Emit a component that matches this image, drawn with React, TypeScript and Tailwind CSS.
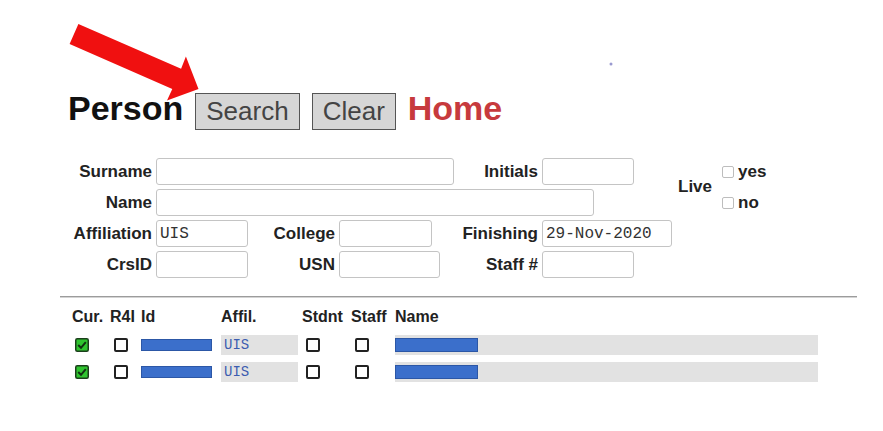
const sans = "font-['Liberation_Sans',Arial,sans-serif]";
const mono = "font-['Liberation_Mono','Courier_New',monospace]";

function Box() {
  return <span className="block w-[14px] h-[14px] border-2 border-[#222] rounded-[2px] bg-white" />;
}

function Checked() {
  return (
    <svg width="14" height="14" viewBox="0 0 14 14" className="block">
      <rect x="0.75" y="0.75" width="12.5" height="12.5" rx="1.5" fill="#2fc42f" stroke="#1b3f1b" strokeWidth="1.5" />
      <path d="M3.2 7 L6 9.8 L10.8 4.2" fill="none" stroke="#123012" strokeWidth="2" />
    </svg>
  );
}

function SmallBox({ label }: { label: string }) {
  return (
    <div className="flex items-center h-[27px] gap-[4px]">
      <span className="block w-[12px] h-[12px] border border-[#bdbdbd] rounded-[2px] bg-white" />
      <span className="text-[17px] font-bold text-[#222]">{label}</span>
    </div>
  );
}

function Label({ text, cls = "" }: { text: string; cls?: string }) {
  return (
    <div className={`text-right text-[17px] font-bold text-[#222] leading-[27px] ${cls}`}>{text}</div>
  );
}

function Field({ w, value = "", cls = "" }: { w: string; value?: string; cls?: string }) {
  return (
    <div className={`ml-[4px] ${cls}`}>
      <input
        readOnly
        value={value}
        className={`${w} h-[27px] border border-[#c4c4c4] rounded-[3px] bg-white px-[3px] ${mono} text-[16px] text-[#333] outline-none`}
      />
    </div>
  );
}

function Row() {
  return (
    <div className="flex h-[20px] items-center">
      <div className="w-[38px] pl-[3px]"><Checked /></div>
      <div className="w-[31px] pl-[4px]"><Box /></div>
      <div className="w-[80px]">
        <div className="w-[71px] h-[12px] bg-[#3b6fcb] border border-[#2c57a6]" />
      </div>
      <div className="w-[81px] h-full">
        <div className={`w-[77px] h-full bg-[#e2e2e2] pl-[3px] ${mono} text-[14px] leading-[20px] text-[#3c5db0]`}>UIS</div>
      </div>
      <div className="w-[49px] pl-[4px]"><Box /></div>
      <div className="w-[44px] pl-[4px]"><Box /></div>
      <div className="w-[423px] h-full bg-[#e2e2e2] flex items-center">
        <div className="w-[83px] h-[14px] bg-[#3b6fcb] border border-[#2c57a6]" />
      </div>
    </div>
  );
}

export default function App() {
  return (
    <div className={`relative w-[883px] h-[431px] bg-white overflow-hidden ${sans}`}>
      {/* title */}
      <div className="flex items-baseline gap-[12px] pl-[68px] pt-[91px]">
        <span className="text-[34px] leading-none font-bold text-[#111]">Person</span>
        <button className="h-[37px] px-[10px] border border-[#555] bg-[#d6d6d6] text-[26px] leading-[35px] text-[#444]">
          Search
        </button>
        <button className="h-[37px] px-[10px] border border-[#555] bg-[#d6d6d6] text-[26px] leading-[35px] text-[#444]">
          Clear
        </button>
        <span className="text-[34px] leading-none font-bold text-[#c73a3d]">Home</span>
      </div>

      {/* search form */}
      <div className="mt-[28px] ml-[64px] grid grid-cols-[88px_110px_73px_115px_88px_134px_auto] gap-y-[4px] items-center">
        <Label text="Surname" />
        <Field w="w-[298px]" cls="col-span-3" />
        <Label text="Initials" />
        <Field w="w-[92px]" />
        <div className="row-span-2 flex items-center pl-[6px] gap-[10px] self-stretch">
          <span className="text-[17px] font-bold text-[#222]">Live</span>
          <div className="flex flex-col gap-[4px]">
            <SmallBox label="yes" />
            <SmallBox label="no" />
          </div>
        </div>

        <Label text="Name" />
        <Field w="w-[438px]" cls="col-span-5" />

        <Label text="Affiliation" />
        <Field w="w-[92px]" value="UIS" />
        <Label text="College" />
        <Field w="w-[93px]" />
        <Label text="Finishing" />
        <Field w="w-[130px]" value="29-Nov-2020" />
        <div />

        <Label text="CrsID" />
        <Field w="w-[92px]" />
        <Label text="USN" />
        <Field w="w-[101px]" />
        <Label text="Staff #" />
        <Field w="w-[92px]" />
        <div />
      </div>

      <div className="mt-[18px] ml-[60px] w-[797px] border-t border-b border-t-[#9c9c9c] border-b-[#d4d4d4]" />

      {/* results */}
      <div className="ml-[72px] mt-[10px]">
        <div className="flex text-[16px] leading-[18px] font-bold text-[#222]">
          <div className="w-[38px]">Cur.</div>
          <div className="w-[31px]">R4I</div>
          <div className="w-[80px]">Id</div>
          <div className="w-[81px]">Affil.</div>
          <div className="w-[49px]">Stdnt</div>
          <div className="w-[44px]">Staff</div>
          <div className="w-[423px]">Name</div>
        </div>
        <div className="mt-[9px] flex flex-col gap-[7px]">
          <Row />
          <Row />
        </div>
      </div>

      {/* annotation arrow */}
      <svg className="absolute inset-0 pointer-events-none" width="883" height="431" viewBox="0 0 883 431">
        <polygon
          points="78.4,23.9 181.1,68.7 185.9,56.5 198.5,89 167,100.5 172.3,88.9 69.6,44.1"
          fill="#f01010"
        />
        <circle cx="611" cy="64" r="1.5" fill="#9a9ad0" />
      </svg>
    </div>
  );
}
